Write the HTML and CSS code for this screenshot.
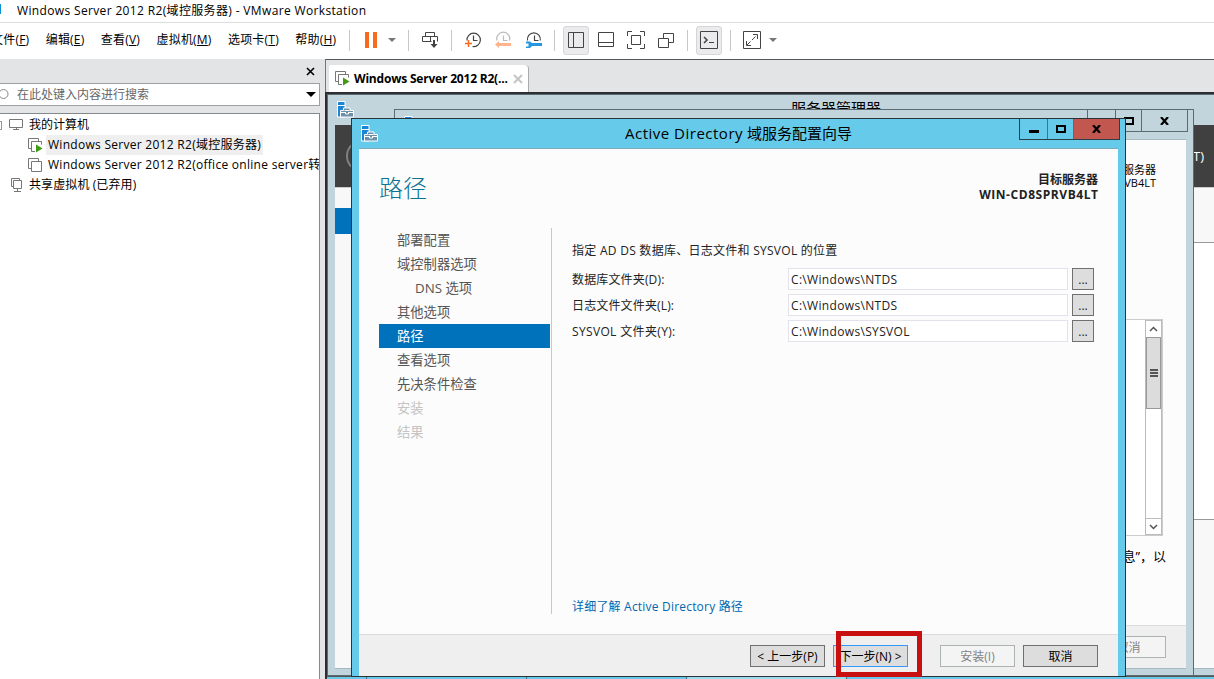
FILE: index.html
```html
<!DOCTYPE html>
<html lang="zh-CN">
<head>
  <meta charset="UTF-8">
  <title>Windows Server 2012 R2(域控服务器) - VMware Workstation</title>
  <link rel="stylesheet" href="styles.css">
</head>
<body>
  <svg class="defs" width="0" height="0">
    <symbol id="server" viewBox="0 0 17 17">
      <path d="M.5.500h7.500v15.500H.5z" fill="#1b86d8" stroke="#fff"/>
      <path d="M1 4.500h7" stroke="#fff"/>
      <path d="M3.500 9.500h3v-2.500h6.500v2.500h3.500v6.500h-13z" fill="#6d8fa8" stroke="#fff"/>
      <path d="M7.500 9.500h5M4 11.500h4M12 11.500h4M8.500 11v2h3v-2" fill="none" stroke="#fff"/>
    </symbol>
    <symbol id="vm-on" viewBox="0 0 15 15">
      <path d="M3.500 10.500h-3v-10h10v3" fill="none" stroke="#777"/>
      <path d="M7 13.500H3.500v-10h10v3" fill="none" stroke="#777"/>
      <path d="M8 6.500v8l6.500-4z" fill="#3f9c12"/>
    </symbol>
    <symbol id="vm-off" viewBox="0 0 15 15">
      <path d="M3.500 10.500h-3v-10h10v3M3.500 3.500h10v10h-10z" fill="none" stroke="#777"/>
    </symbol>
  </svg>

  <header class="titlebar"><span class="app-icon"></span><span class="app-title">Windows Server 2012 R2(域控服务器) - VMware Workstation</span></header>

  <div class="menubar">
    <nav class="menu">
      <span>文件(<u>F</u>)</span>
      <span>编辑(<u>E</u>)</span>
      <span>查看(<u>V</u>)</span>
      <span>虚拟机(<u>M</u>)</span>
      <span>选项卡(<u>T</u>)</span>
      <span>帮助(<u>H</u>)</span>
    </nav>
    <div class="toolbar">
      <i class="sep"></i>
      <svg width="12" height="16"><path d="M0 0h4v16H0zM8 0h4v16H8z" fill="#fa6a1e"/></svg>
      <i class="caret"></i>
      <i class="sep"></i>
      <svg width="18" height="18" fill="none" stroke="#444"><path d="M4.500 5.500v-4h9v4M1.500 10.500v-5h15v5M1.500 10.500h9M9.500 5.500v5"/><path d="M13 9v6" stroke-width="2"/><path d="M9.500 13h7l-3.500 4z" fill="#444" stroke="none"/></svg>
      <i class="sep"></i>
      <svg width="18" height="18" fill="none" stroke="#444" stroke-width="1.200"><path d="M3 9.500a6.700 6.700 0 1 1 5.500 6"/><path d="M9.500 4.500v5h4"/><path d="M1 12.500h7M4.500 9v7" stroke="#fa6a1e" stroke-width="1.500"/></svg>
      <svg width="18" height="18" fill="none" stroke="#bbb" stroke-width="1.200"><path d="M3 9.500a6.500 6.500 0 1 1 12.500 0"/><path d="M9.500 4.500v5h4"/><path d="M1 13.500l4-3.500v2h12v3H5v2z" fill="#ffb48c" stroke="none"/></svg>
      <svg width="18" height="18" fill="none" stroke="#444" stroke-width="1.200"><path d="M2.500 9.500a6.500 6.500 0 1 1 12.800 0"/><path d="M9.500 4.500v5h4"/><path d="M1 10.500h4l2 1.500h10v3H7l-2 2H1v-1.500h2.500v-3H1z" fill="#2597dd" stroke="none"/></svg>
      <i class="sep"></i>
      <span class="toggled"><svg width="17" height="17" fill="none" stroke="#444"><path d="M.5.500h15v15H.5zM5.500.500v15"/></svg></span>
      <svg width="17" height="16" fill="none" stroke="#444"><path d="M.5.500h15v14H.5zM.5 10.500h15"/></svg>
      <svg width="18" height="18" fill="none" stroke="#444"><path d="M.5 5V.5H5M13 .5h4.500V5M17.500 13v4.500H13M5 17.500H.5V13M4.500 4.500h9v9h-9z"/></svg>
      <svg width="17" height="17" fill="none" stroke="#444"><path d="M.5 6.500h10v9H.5zM5.500 6.500v-5h10v9h-5"/></svg>
      <i class="sep"></i>
      <span class="toggled"><svg width="18" height="18" fill="none" stroke="#444"><path d="M.5.500h17v17H.5zM9 11.500h5"/><path d="M4 6l3 3-3 3" stroke-width="1.500"/></svg></span>
      <i class="sep"></i>
      <svg width="18" height="18" fill="none" stroke="#444"><path d="M.5.500h17v17H.5zM10 3.500h4.500V8M3.500 10v4.500H8"/><path d="M4 14L14 4" stroke-dasharray="5 2"/></svg>
      <i class="caret"></i>
    </div>
  </div>

  <div class="workspace">
    <aside class="library">
      <div class="library-head"><svg width="9" height="9" stroke="#000" stroke-width="1.600"><path d="M1 1l7 7M8 1L1 8"/></svg></div>
      <div class="search">
        <svg width="9" height="14" fill="none" stroke="#888"><circle cx="3.500" cy="6" r="4.500"/></svg>
        <span>在此处键入内容进行搜索</span>
        <i class="drop"></i>
      </div>
      <div class="tree">
        <div class="node root"><i class="expander"></i><svg width="15" height="12" fill="none" stroke="#777"><path d="M.5.500h13v8H.5zM7.500 8.500v2M4 10.500h6"/></svg><span>我的计算机</span></div>
        <div class="node vm"><svg width="15" height="15"><use href="#vm-on"/></svg><span class="selected">Windows Server 2012 R2(域控服务器)</span></div>
        <div class="node vm second"><svg width="15" height="15"><use href="#vm-off"/></svg><span>Windows Server 2012 R2(office online server转</span></div>
        <div class="node shared"><svg width="13" height="15" fill="none" stroke="#777"><path d="M3 8.500H.5v-8h8V2M2.500 2.500h8v8h-8zM6.500 10.500v3M3 13.500h7"/></svg><span>共享虚拟机 (已弃用)</span></div>
      </div>
    </aside>

    <main class="console">
      <div class="tabs">
        <div class="tab"><svg width="15" height="15"><use href="#vm-on"/></svg><span>Windows Server 2012 R2(...</span><svg width="10" height="10" stroke="#c4c4c4" stroke-width="2"><path d="M1 1l8 8M9 1L1 9"/></svg></div>
      </div>

      <div class="guest">
        <div class="taskbar"><i></i><i></i><i></i><i class="lit"></i></div>

        <section class="window manager">
          <div class="caption"><svg class="win-icon" width="17" height="17"><use href="#server"/></svg>服务器管理器</div>
          <div class="manager-body">
            <div class="manager-head"><i class="back"></i><span>T)</span></div>
            <div class="manager-main">
              <div class="manager-nav"></div>
              <div class="manager-list"></div>
            </div>
          </div>
        </section>

        <section class="window behind">
          <div class="caption"><svg class="win-icon" width="17" height="17"><use href="#server"/></svg>
            <div class="controls"><i class="min"></i><i class="max"></i><i class="close"><svg width="9" height="8" stroke="#000" stroke-width="2.200"><path d="M1 0l7 8M8 0L1 8"/></svg></i></div>
          </div>
          <div class="behind-body">
            <div class="behind-target">服务器<br>VB4LT</div>
            <div class="results">
              <div class="scrollbar">
                <i class="arrow"><svg width="9" height="6" fill="none" stroke="#555" stroke-width="1.500"><path d="M1 5l3.500-3.500L8 5"/></svg></i>
                <i class="thumb"></i>
                <i class="arrow down"><svg width="9" height="6" fill="none" stroke="#555" stroke-width="1.500"><path d="M1 1l3.500 3.500L8 1"/></svg></i>
              </div>
            </div>
            <div class="note">息”，以</div>
            <div class="behind-foot"><span class="btn disabled">取消</span></div>
          </div>
        </section>

        <section class="window wizard">
          <div class="caption"><svg class="win-icon" width="17" height="17"><use href="#server"/></svg><span class="wizard-title"><span>Active Directory</span> 域服务配置向导</span>
            <div class="controls"><i class="min"></i><i class="max"></i><i class="close"><svg width="9" height="8" stroke="#000" stroke-width="2.200"><path d="M1 0l7 8M8 0L1 8"/></svg></i></div>
          </div>
          <div class="wizard-body">
            <div class="wizard-head">
              <h1>路径</h1>
              <div class="target">目标服务器<br><span>WIN-CD8SPRVB4LT</span></div>
            </div>
            <div class="wizard-main">
              <ul class="steps">
                <li>部署配置</li>
                <li>域控制器选项</li>
                <li class="sub">DNS 选项</li>
                <li>其他选项</li>
                <li class="current">路径</li>
                <li>查看选项</li>
                <li>先决条件检查</li>
                <li class="off">安装</li>
                <li class="off">结果</li>
              </ul>
              <div class="form">
                <p class="intro">指定 AD DS 数据库、日志文件和 SYSVOL 的位置</p>
                <div class="field"><label class="db">数据库文件夹(D):</label><div class="path">C:\Windows\NTDS</div><span class="browse">...</span></div>
                <div class="field"><label class="log">日志文件文件夹(L):</label><div class="path">C:\Windows\NTDS</div><span class="browse">...</span></div>
                <div class="field"><label class="sysvol">SYSVOL 文件夹(Y):</label><div class="path">C:\Windows\SYSVOL</div><span class="browse">...</span></div>
                <a class="more">详细了解 Active Directory 路径</a>
              </div>
            </div>
            <div class="wizard-foot">
              <span class="btn">&lt; 上一步(P)</span>
              <span class="btn default">下一步(N) &gt;</span>
              <span class="btn disabled install">安装(I)</span>
              <span class="btn">取消</span>
            </div>
          </div>
        </section>

        <div class="highlight"></div>
      </div>
    </main>
  </div>
</body>
</html>
```
FILE: styles.css
```css
:root {
  --chrome: #e3e4e6;
  --inactive: #c3d5dc;
  --active: #66cbea;
  --blue: #0072bc;
}

*,
*::before {
  box-sizing: border-box;
}

body {
  margin: 0;
  height: 679px;
  overflow: hidden;
  display: flex;
  flex-direction: column;
  background: #fff;
  color: #000;
  font-family: "Open Sans", "Noto Sans CJK SC", sans-serif;
  font-size: 12px;
  white-space: nowrap;
}

svg {
  display: block;
  flex: none;
}

.defs {
  position: absolute;
}

.titlebar {
  height: 23px;
  flex: none;
  display: flex;
  border-bottom: 1px solid #dedede;
  line-height: 21px;
}

.app-icon {
  width: 1px;
  height: 10px;
  margin: 4px 16px 0 0;
  background: #0a94d6;
}

.app-title {
  letter-spacing: 0.35px;
}

.menubar {
  height: 36px;
  flex: none;
  display: flex;
  align-items: center;
}

.menu {
  width: 351px;
  display: flex;
  gap: 16.4px;
  margin-left: -9px;
  margin-top: -3px;
  line-height: 20px;
  letter-spacing: 0.2px;
}

.toolbar {
  display: grid;
  grid-template-columns: 15px 28px 14px 19px 24px 19px 24px 36px 25px 17px 26px 34px 26px 34px 9px 34px 9px 34px 8px;
  justify-items: center;
  align-items: center;
  height: 36px;
  padding-bottom: 2px;
}

.sep {
  width: 1px;
  height: 21px;
  background: #c8c8c8;
}

.caret {
  border: 4px solid transparent;
  border-top: 4px solid #777;
  border-bottom: 0;
}

.toggled {
  width: 26px;
  height: 29px;
  display: flex;
  align-items: center;
  justify-content: center;
  border: 1px solid #d6d6d8;
  border-radius: 3px;
  background: #ebebed;
}

.workspace {
  flex: 1;
  display: flex;
  min-height: 0;
  background: var(--chrome);
}

.library {
  width: 325px;
  flex: none;
  padding-right: 5px;
  display: flex;
  flex-direction: column;
}

.library-head {
  height: 24px;
  display: flex;
  justify-content: flex-end;
  align-items: center;
  padding-right: 5px;
}

.search {
  height: 23px;
  display: flex;
  align-items: center;
  border: 1px solid #a0a0a0;
  border-left: 0;
  background: #fff;
  color: #666;
}

.search span {
  margin-left: 8px;
  margin-top: -1px;
  flex: 1;
}

.drop {
  border: 5px solid transparent;
  border-top: 5px solid #000;
  border-bottom: 0;
  margin-right: 3px;
}

.tree {
  flex: 1;
  margin-top: 7px;
  padding-top: 1px;
  border-top: 1px solid #85888e;
  border-right: 1px solid #85888e;
  background: #fff;
  overflow: hidden;
}

.node {
  height: 20px;
  display: flex;
  align-items: center;
  line-height: 20px;
}

.expander {
  width: 2px;
  height: 9px;
  border: 1px solid #999;
  border-left: 0;
  margin-right: 7px;
}

.root span {
  margin-left: 5px;
}

.vm {
  padding-left: 28px;
}

.vm span {
  margin-left: 3px;
  padding: 0 2px;
  letter-spacing: 0.28px;
}

.vm .selected {
  background: #efefef;
}

.shared {
  padding-left: 11px;
}

.shared span {
  margin-left: 5px;
  letter-spacing: 0.1px;
}

.console {
  flex: 1;
  min-width: 0;
  display: flex;
  flex-direction: column;
}

.tabs {
  height: 33px;
  flex: none;
  border-top: 1px solid #55575b;
  border-left: 1px solid #75777b;
  padding: 5px 0 0 3px;
}

.tab {
  width: 200px;
  height: 27px;
  display: flex;
  align-items: center;
  padding-left: 6px;
  background: #fff;
  border-right: 1px solid #aaa;
  border-radius: 2px 4px 0 0;
  font-weight: 700;
}

.tab span {
  margin: 0 4px;
  width: 155px;
  letter-spacing: -0.2px;
}

/* windows are placed freely on the guest desktop */
.guest {
  flex: 1;
  position: relative;
  overflow: hidden;
  border-top: 2px solid #2d2e31;
  border-left: 2px solid #2d2e31;
  background: var(--active);
}

.taskbar {
  position: absolute;
  left: 0;
  right: 0;
  bottom: 0;
  height: 3px;
  display: flex;
  border-top: 1px solid #555;
}

.taskbar i {
  width: 160px;
  border-right: 1px solid #3a6f82;
}

.taskbar i:first-child {
  width: 40px;
}

.taskbar .lit {
  background: #9adcf0;
}

.window {
  position: absolute;
  display: flex;
  flex-direction: column;
  border: 1px solid #5d6a71;
  background: var(--inactive);
}

.manager {
  left: 0;
  top: 0;
  width: 900px;
  height: 582px;
  padding: 0 0 6px 7px;
}

.caption {
  height: 29px;
  flex: none;
  display: flex;
}

.manager .caption {
  height: 30px;
  padding-left: 2px;
  font-size: 15px;
  line-height: 27px;
}

.manager .win-icon {
  margin: 6px 437px 0 0;
}

.manager-body {
  flex: 1;
  display: flex;
  flex-direction: column;
  background: #f8f8f8;
  border-bottom: 1px solid #a8b8c0;
}

.manager-head {
  height: 62px;
  display: flex;
  align-items: center;
  justify-content: space-between;
  padding-left: 11px;
  padding-right: 22px;
  background: #404040;
  color: #fff;
  font-size: 13px;
}

.back {
  width: 32px;
  height: 32px;
  border: 2px solid #808080;
  border-radius: 50%;
}

.manager-main {
  flex: 1;
  display: flex;
  border-top: 1px solid #ccc;
}

.manager-nav {
  width: 200px;
  height: 26px;
  margin-top: 20px;
  background: var(--blue);
}

.manager-list {
  flex: 1;
  height: 278px;
  margin-top: 54px;
  border: 1px solid #999;
  background: #fff;
}

.behind {
  left: 67px;
  top: 15px;
  width: 800px;
  height: 567px;
  padding: 0 7px 6px;
}

.behind .caption {
  padding-left: 2px;
}

.win-icon {
  margin-top: 6px;
}

.controls {
  margin-left: auto;
  height: 22px;
  display: flex;
  border: 1px solid #5d6a71;
  border-top: 0;
  margin-right: -2px;
}

.controls i {
  display: flex;
  align-items: center;
  justify-content: center;
}

.min {
  width: 28px;
  border-right: 1px solid #5d6a71;
}

.min::before {
  content: "";
  width: 10px;
  height: 3px;
  margin-top: 4px;
  background: #000;
}

.max {
  width: 26px;
  border-right: 1px solid #5d6a71;
}

.max::before {
  content: "";
  width: 10px;
  height: 8px;
  border: 2px solid #000;
}

.close {
  width: 45px;
}

.behind-body {
  flex: 1;
  display: flex;
  flex-direction: column;
  background: #fcfcfc;
  border-top: 1px solid #a8bac2;
  border-bottom: 1px solid #a8b8c0;
  min-height: 0;
}

.behind-target {
  padding: 24px 30px 0 0;
  height: 179px;
  text-align: right;
  font-size: 11px;
  line-height: 12.5px;
}

.results {
  height: 217px;
  margin: 0 23px 0 20px;
  display: flex;
  justify-content: flex-end;
  border: 1px solid #ccc;
  background: #fff;
}

.scrollbar {
  width: 17px;
  display: flex;
  flex-direction: column;
  border: 1px solid #bbb;
}

.arrow {
  height: 16px;
  display: flex;
  align-items: center;
  justify-content: center;
}

.arrow.down {
  margin-top: auto;
  border-top: 1px solid #bbb;
}

.thumb {
  height: 72px;
  display: flex;
  align-items: center;
  justify-content: center;
  border: 1px solid #999;
  background: #dcdcdc;
}

.thumb::before {
  content: "";
  width: 8px;
  height: 8px;
  background: repeating-linear-gradient(#555 0 2px, #dcdcdc 2px 3px);
}

.note {
  flex: 1;
  padding: 10px 20px 0 0;
  text-align: right;
  font-size: 13px;
  line-height: 20px;
}

.behind-foot {
  height: 43px;
  padding: 10px 20px 0;
  display: flex;
  justify-content: flex-end;
  border-top: 1px solid #dadada;
  background: #efefef;
}

.btn {
  width: 75px;
  height: 22px;
  flex: none;
  border: 1px solid #707070;
  background: #ddd;
  text-align: center;
  line-height: 22px;
}

.btn.default {
  border-color: #3399ff;
}

.btn.disabled {
  border-color: #adb2b5;
  background: #f4f4f4;
  color: #838383;
}

.wizard {
  left: 24px;
  top: 24px;
  width: 775px;
  height: 559px;
  padding: 0 7px;
  border-color: #2b3338;
  background: var(--active);
}

.wizard .caption {
  padding-left: 2px;
}

.wizard-title {
  margin-left: 247px;
  font-size: 15px;
  line-height: 28px;
}

.wizard-title span {
  letter-spacing: 0.5px;
}

.wizard .controls {
  height: 21px;
  border-color: #2b3f48;
}

.wizard .close {
  background: #c2574f;
}

.wizard-body {
  flex: 1;
  display: flex;
  flex-direction: column;
  border-top: 1px solid #7fa9bd;
  background: #fcfcfc;
}

.wizard-head {
  height: 79px;
  display: flex;
  justify-content: space-between;
  padding: 0 20px;
}

h1 {
  margin: 21px 0 0;
  color: #0b7391;
  font-size: 24px;
  font-weight: 300;
  line-height: 36px;
}

.target {
  margin-top: 23px;
  color: #222;
  font-weight: 700;
  text-align: right;
  line-height: 15px;
}

.target span {
  letter-spacing: 0.55px;
  margin-right: -0.5px;
}

.wizard-main {
  height: 406px;
  display: flex;
  padding: 0 20px;
}

.steps {
  width: 173px;
  height: 386px;
  margin: 0;
  padding: 0 1px 0 0;
  border-right: 1px solid #c8c8c8;
  list-style: none;
  color: #555;
  font-size: 13.3px;
  line-height: 24.5px;
}

.steps li {
  height: 24px;
  padding-left: 18px;
}

.steps .sub {
  padding-left: 36px;
}

.steps .current {
  background: var(--blue);
  color: #fff;
}

.steps .off {
  color: #c4c4c4;
}

.form {
  flex: 1;
  display: flex;
  flex-direction: column;
  padding: 13px 4px 17px 20px;
  color: #222;
}

.intro {
  margin: 0 0 7px;
  line-height: 20px;
  letter-spacing: 0.27px;
}

.field {
  height: 22px;
  margin-bottom: 4px;
  display: flex;
  line-height: 24px;
}

.field label {
  width: 216px;
  letter-spacing: 0.15px;
}

.field .sysvol {
  letter-spacing: 0.35px;
}

.path {
  width: 280px;
  padding-left: 2px;
  border: 1px solid #e2e2ec;
  background: #fff;
  line-height: 22px;
  letter-spacing: 0.33px;
}

.browse {
  width: 22px;
  margin-left: 4px;
  border: 1px solid #707070;
  background: #ddd;
  text-align: center;
  line-height: 22px;
}

.more {
  margin-top: auto;
  color: #0067b0;
  line-height: 20px;
  letter-spacing: 0.2px;
}

.wizard-foot {
  flex: 1;
  display: flex;
  justify-content: flex-end;
  gap: 8px;
  padding: 10px 20px 0 0;
  border-top: 1px solid #dadada;
  background: #efefef;
}

.install {
  margin-left: 24px;
}

/* marker around the next button */
.highlight {
  position: absolute;
  left: 509px;
  top: 537px;
  width: 86px;
  height: 46px;
  border: 5px solid #c81010;
}
```
